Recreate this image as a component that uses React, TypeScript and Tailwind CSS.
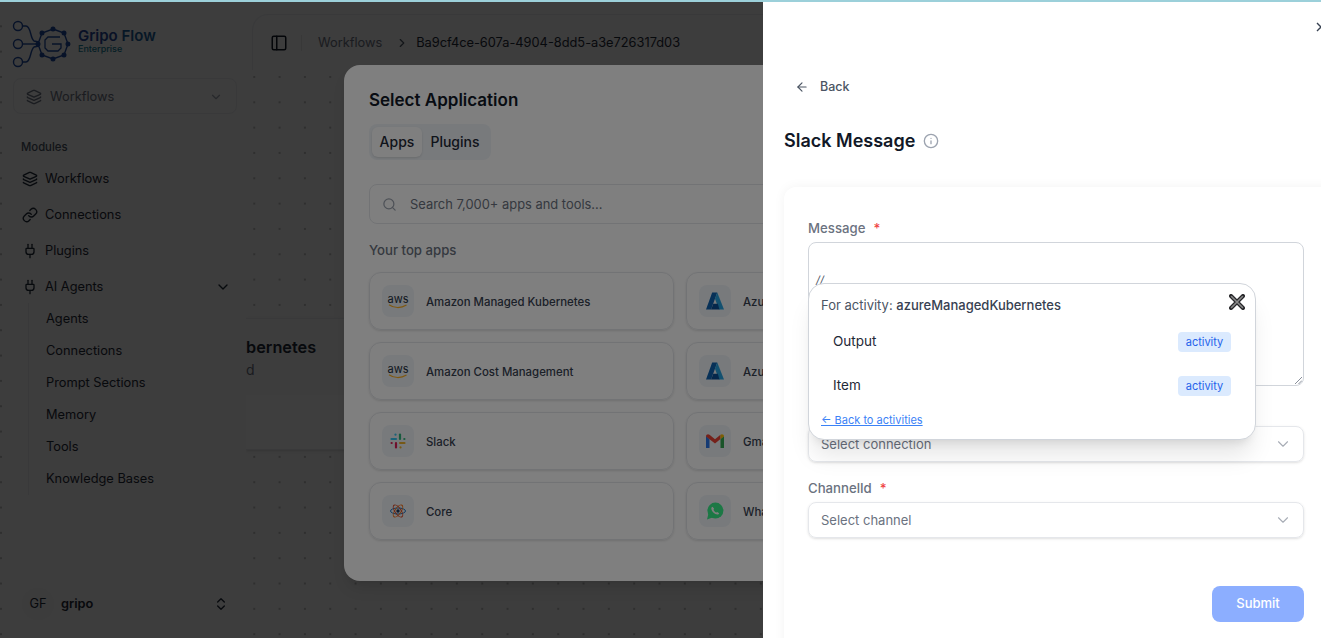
import { ReactNode } from "react";
import {
  ArrowLeft,
  ChevronDown,
  ChevronRight,
  ChevronsUpDown,
  Info,
  Layers,
  Link,
  PanelLeft,
  Plug,
  Search,
} from "lucide-react";

const subItems = [
  "Agents",
  "Connections",
  "Prompt Sections",
  "Memory",
  "Tools",
  "Knowledge Bases",
];

function GripoLogo() {
  const points = [
    [53, 31],
    [64, 35],
    [68, 46],
    [64, 57],
    [53, 61],
    [42, 57],
    [38, 46],
    [42, 35],
  ];
  return (
    <svg width="62" height="52" viewBox="10 20 62 52" fill="none" stroke="#1e4aa0" strokeWidth="1.4">
      <circle cx="18" cy="28" r="4.5" />
      <circle cx="18" cy="46" r="4.5" />
      <circle cx="18" cy="64" r="4.5" />
      <path d="M22.5 28H26C31 28 30 40 34 43L39 44" />
      <path d="M22.5 46H39" />
      <path d="M22.5 64H26C31 64 30 52 34 49L39 48" />
      <polygon points={points.map((p) => p.join(",")).join(" ")} />
      {points.map((p) => (
        <circle key={p.join()} cx={p[0]} cy={p[1]} r="1.8" fill="#1e4aa0" />
      ))}
      <path d="M60 39H48L45 42V50L48 53H58L61 50V46H52" strokeWidth="1.3" />
    </svg>
  );
}

function AwsIcon() {
  return (
    <div className="flex flex-col items-center leading-none">
      <span className="text-[11px] leading-[10px] text-[#232f3e]">aws</span>
      <svg width="20" height="5" viewBox="0 0 20 5" fill="none">
        <path d="M1 0.8C6 4.4 13 4.4 18.5 1" stroke="#ffb020" strokeWidth="1.2" />
      </svg>
    </div>
  );
}

function AzureIcon() {
  return (
    <svg width="18" height="18" viewBox="0 0 16 16">
      <path d="M5.5 0.5H10L4.5 15.5H0Z" fill="#0f62b0" />
      <path d="M10 0.5L16 15.5H11.5L8 6Z" fill="#27a3e0" />
      <path d="M6.5 10.5H10.5L12 15.5H4.5Z" fill="#0a4f96" />
    </svg>
  );
}

function SlackIcon() {
  return (
    <svg width="16" height="16" viewBox="0 0 16 16" fill="none" strokeWidth="2.2" strokeLinecap="round">
      <path d="M1.5 6H6" stroke="#36c5f0" />
      <path d="M5.5 1.6V1.7" stroke="#36c5f0" />
      <path d="M10 1.5V6" stroke="#2eb67d" />
      <path d="M14.4 6H14.3" stroke="#2eb67d" />
      <path d="M10 10H14.5" stroke="#ecb22e" />
      <path d="M10.5 14.4V14.3" stroke="#ecb22e" />
      <path d="M6 10V14.5" stroke="#e01e5a" />
      <path d="M1.6 10H1.7" stroke="#e01e5a" />
    </svg>
  );
}

function GmailIcon() {
  return (
    <svg width="18" height="14" viewBox="0 0 18 14" fill="none">
      <path d="M0 2V14H3.5V5Z" fill="#2a76e8" />
      <path d="M18 2V14H14.5V5Z" fill="#34a853" />
      <path d="M0 2.5C0 0.5 2 -0.5 3.5 0.8L9 5.2L14.5 0.8L14.5 5L9 9.5L0 2.5Z" fill="#ea4335" />
      <path d="M14.5 0.8C16 -0.5 18 0.5 18 2.5L14.5 5Z" fill="#fbbc04" />
    </svg>
  );
}

function CoreIcon() {
  return (
    <svg width="16" height="16" viewBox="0 0 16 16" fill="none">
      <ellipse cx="8" cy="8" rx="7.5" ry="3" stroke="#1f78c8" />
      <ellipse cx="8" cy="8" rx="3" ry="7" stroke="#f97316" transform="rotate(35 8 8)" />
      <ellipse cx="8" cy="8" rx="3" ry="7" stroke="#dc4a26" transform="rotate(-35 8 8)" />
      <circle cx="8" cy="8" r="1.7" fill="#1e3a5f" />
    </svg>
  );
}

function WhatsappIcon() {
  return (
    <svg width="18" height="18" viewBox="0 0 18 18">
      <circle cx="9.4" cy="8.6" r="8" fill="#38f08a" />
      <path d="M1 17.5L2.5 11.5L6.5 15.5Z" fill="#38f08a" />
      <path
        d="M6.6 4.8L5.5 5.6C5 7 5.8 9 7.3 10.6C8.9 12.1 10.9 12.9 12.3 12.4L13.2 11.3L11.2 9.9L10.3 10.6C9.3 10.3 7.9 8.9 7.5 7.8L8.1 6.8Z"
        fill="#ffffff"
      />
    </svg>
  );
}

const apps: { name: string; icon: ReactNode }[] = [
  { name: "Amazon Managed Kubernetes", icon: <AwsIcon /> },
  { name: "Azure Managed Kubernetes", icon: <AzureIcon /> },
  { name: "Amazon Cost Management", icon: <AwsIcon /> },
  { name: "Azure Cost Management", icon: <AzureIcon /> },
  { name: "Slack", icon: <SlackIcon /> },
  { name: "Gmail", icon: <GmailIcon /> },
  { name: "Core", icon: <CoreIcon /> },
  { name: "WhatsApp", icon: <WhatsappIcon /> },
];

function NavItem({ icon, label, chevron }: { icon: ReactNode; label: string; chevron?: boolean }) {
  return (
    <div className="flex h-9 items-center gap-[7px] pl-[7px] pr-[6px] text-[12.8px] text-[#1f2937]">
      {icon}
      <span>{label}</span>
      {chevron && <ChevronDown size={16} className="ml-auto" />}
    </div>
  );
}

function Sidebar() {
  return (
    <aside className="relative z-10 ml-[2px] flex h-full w-[244px] shrink-0 flex-col bg-[#f4f4f4] pl-[11px] pr-[9px] pt-[14px] pb-[18px]">
      <div className="-ml-[3px] flex h-[56px] items-center gap-[6px] pt-[4px]">
        <GripoLogo />
        <div className="-mt-[8px] flex flex-col">
          <span className="text-[15px] leading-[16px] font-semibold">
            <span className="text-[#24479a]">Gripo </span>
            <span className="text-[#1a5f99]">Flow</span>
          </span>
          <span className="text-[9px] leading-[9px] font-medium text-[#127a94]">Enterprise</span>
        </div>
      </div>
      <div className="mt-[8px] flex h-9 items-center gap-[8px] rounded-lg border border-[#e5e7eb] pl-[12px] pr-[13px] pt-px text-[12.8px] text-[#6b7280]">
        <Layers size={16} />
        <span>Workflows</span>
        <ChevronDown size={14} className="ml-auto text-[#9ca3af]" />
      </div>
      <div className="mt-[25px] ml-[8px] h-4 text-[11.3px] leading-4 font-medium text-[#4b5563]">Modules</div>
      <nav className="mt-[6px] flex flex-col pl-[2px]">
        <NavItem icon={<Layers size={16} />} label="Workflows" />
        <NavItem icon={<Link size={16} />} label="Connections" />
        <NavItem icon={<Plug size={16} />} label="Plugins" />
        <NavItem icon={<Plug size={16} />} label="AI Agents" chevron />
      </nav>
      <div className="-mt-[2px] ml-[15px] flex flex-col border-l border-[#e5e7eb] pl-[17px]">
        {subItems.map((item) => (
          <div key={item} className="flex h-8 items-center text-[12.8px] text-[#1f2937]">
            {item}
          </div>
        ))}
      </div>
      <div className="mt-auto flex h-8 items-center pl-[9px] pr-[8px] text-[12.8px]">
        <div className="flex size-8 items-center justify-center rounded-full bg-[#f0f0f0] text-[#1f2937]">GF</div>
        <span className="ml-[7px] font-semibold text-[#1f2937]">gripo</span>
        <ChevronsUpDown size={16} className="ml-auto text-[#1f2937]" />
      </div>
    </aside>
  );
}

function MainArea() {
  return (
    <main className="relative flex min-w-0 flex-1 flex-col">
      <header className="ml-[6px] mt-[14px] flex h-[56px] items-center rounded-tl-2xl border-l border-t border-[#e5e7eb] bg-[#f4f4f4] pl-[17px] text-[12.8px]">
        <PanelLeft size={18} className="text-[#111827]" />
        <div className="ml-[13px] mr-[16px] h-4 w-px bg-[#e0e0e0]" />
        <span className="text-[#6b7280]">Workflows</span>
        <ChevronRight size={14} className="ml-[13px] mr-[7px] text-[#4b5563]" />
        <span className="text-[#1f2937]">Ba9cf4ce-607a-4904-8dd5-a3e726317d03</span>
      </header>
      {/* workflow node on the canvas, only its right part shows past the sidebar */}
      <div className="absolute left-0 top-[318px] h-[132px] w-[280px] rounded-r-xl border-y border-r border-[#e5e7eb] bg-[#f6f6f6] shadow-sm">
        <div className="mt-[16px] text-[16.3px] leading-6 font-semibold text-[#1f2937]">bernetes</div>
        <div className="mt-[1px] text-sm leading-5 text-[#6b7280]">d</div>
        <div className="absolute inset-x-0 bottom-0 h-[54px] rounded-br-xl bg-[#fafafa]" />
      </div>
    </main>
  );
}

function AppDialog() {
  return (
    <div className="absolute left-[344px] top-[65px] h-[516px] w-[672px] rounded-2xl bg-white px-[25px] pt-[23px] shadow-lg">
      <h2 className="text-[17px] leading-6 font-semibold text-[#111827]">Select Application</h2>
      <div className="mt-[12px] inline-flex h-9 items-center rounded-lg bg-[#f1f5f9] p-[3px] text-sm font-medium text-[#1f2937]">
        <div className="flex h-[30px] w-[50px] items-center justify-center rounded-md bg-white shadow-sm">Apps</div>
        <div className="flex h-[30px] w-[66px] items-center justify-center">Plugins</div>
      </div>
      <div className="mt-[24px] flex h-10 items-center gap-[13px] rounded-lg border border-[#e5e7eb] pl-[12px] text-[12.9px] text-[#6b7280]">
        <Search size={15} className="text-[#9ca3af]" />
        <span className="pt-px">Search 7,000+ apps and tools...</span>
      </div>
      <div className="mt-[16px] h-5 text-[13.2px] leading-5 font-medium text-[#6b7280]">Your top apps</div>
      <div className="mt-[12px] grid grid-cols-2 gap-3">
        {apps.map((app) => (
          <div
            key={app.name}
            className="flex h-[58px] items-center gap-3 rounded-xl border border-[#e5e7eb] pl-[12px] shadow-sm"
          >
            <div className="flex size-8 items-center justify-center rounded-lg bg-[#f1f5f9]">{app.icon}</div>
            <span className="mt-[4px] text-[11.4px] font-medium text-[#374151]">{app.name}</span>
          </div>
        ))}
      </div>
    </div>
  );
}

function ActivityRow({ label }: { label: string }) {
  return (
    <div className="flex h-11 items-center pl-[12px] pr-[24px] text-[13.5px] text-[#1f2937]">
      <span className="-mt-[2px]">{label}</span>
      <span className="ml-auto flex h-5 w-[53px] items-center justify-center rounded bg-[#dbeafe] text-[11px] text-[#2563eb]">
        activity
      </span>
    </div>
  );
}

function VariablePopup() {
  return (
    <div className="absolute left-[808px] top-[283px] z-10 h-[157px] w-[448px] rounded-2xl border border-[#d1d5db] bg-white pl-[12px] pt-[13px] shadow-xl">
      <div className="flex h-[18px] items-center text-[13px] text-[#4b5563]">
        For activity:&nbsp;<span className="font-medium text-[#374151]">azureManagedKubernetes</span>
      </div>
      <svg width="16" height="16" viewBox="0 0 16 16" className="absolute right-[10px] top-[10px]" fill="none" strokeLinecap="round">
        <path d="M2 2L14 14M14 2L2 14" stroke="#27272a" strokeWidth="4" />
        <path d="M2.5 2.5L13.5 13.5M13.5 2.5L2.5 13.5" stroke="#8a8a8a" strokeWidth="1.6" />
      </svg>
      <div className="mt-[5px]">
        <ActivityRow label="Output" />
        <ActivityRow label="Item" />
      </div>
      <div className="mt-[4px] text-[11px] leading-4 text-[#3b82f6] underline">← Back to activities</div>
    </div>
  );
}

function Field({ label, placeholder }: { label: string; placeholder: string }) {
  return (
    <div className="mt-[17px]">
      <div className="flex h-5 items-center gap-[8px] text-[13.2px] font-medium text-[#6b7280]">
        {label} <span className="text-[#ef4444]">*</span>
      </div>
      <div className="mt-[3px] flex h-9 items-center justify-between rounded-lg border border-[#e5e7eb] pl-[12px] pr-[11px] text-[13px] text-[#6b7280] shadow-sm">
        <span className="pt-[2px]">{placeholder}</span>
        <ChevronDown size={18} strokeWidth={1.5} className="text-[#a8adb6]" />
      </div>
    </div>
  );
}

function Drawer() {
  return (
    <div className="absolute bottom-0 right-0 top-[2px] w-[558px] overflow-hidden bg-white">
      <svg width="10" height="10" viewBox="0 0 10 10" className="absolute -right-[5px] top-[20px]" stroke="#374151" strokeWidth="1.4">
        <path d="M1 1L9 9M9 1L1 9" />
      </svg>
      <div className="ml-[32px] mt-[75px] flex h-[20px] items-center gap-[11px] text-[12.5px] font-medium text-[#4b5563]">
        <ArrowLeft size={14} />
        <span>Back</span>
      </div>
      <div className="ml-[21px] mt-[30px] flex h-7 items-center gap-[8px]">
        <h1 className="text-lg font-semibold text-[#111827]">Slack Message</h1>
        <Info size={16} className="text-[#9ca3af]" />
      </div>
      <div className="ml-[21px] mt-[32px] h-[500px] w-[560px] rounded-xl bg-white pl-[24px] pr-[40px] pt-[32px] shadow-[0_0_12px_rgba(0,0,0,0.05)]">
        <div className="flex h-5 items-center gap-[8px] text-[13.2px] font-medium text-[#6b7280]">
          Message <span className="text-[#ef4444]">*</span>
        </div>
        <div className="relative mt-[3px] h-[144px] rounded-lg border border-[#d1d5db] pl-[7px] pt-[29px] text-[11px] italic text-[#4b5563]">
          //
          <svg width="8" height="8" viewBox="0 0 8 8" className="absolute bottom-[1px] right-[1px]" stroke="#6b7280" strokeWidth="0.8">
            <path d="M1 8L8 1M4.5 8L8 4.5" />
          </svg>
        </div>
        <Field label="Connection" placeholder="Select connection" />
        <Field label="ChannelId" placeholder="Select channel" />
        <div className="mt-[48px] flex justify-end">
          <div className="flex h-9 w-[92px] items-center justify-center rounded-lg bg-[#8caeff] text-[13px] font-medium text-white">
            Submit
          </div>
        </div>
      </div>
    </div>
  );
}

export default function App() {
  return (
    <div className="relative flex h-screen w-screen overflow-hidden bg-[#f4f4f4] bg-[radial-gradient(circle_at_1px_1px,#bdbdbd_1px,transparent_0)] bg-[length:25.33px_25.33px] [font-family:Inter,sans-serif]">
      <Sidebar />
      <MainArea />
      <div className="absolute inset-0 z-20 bg-black/50" />
      <div className="absolute inset-0 z-20">
        <AppDialog />
      </div>
      <div className="absolute inset-0 z-20 bg-black/50" />
      <div className="absolute inset-0 z-20">
        <Drawer />
        <VariablePopup />
      </div>
      <div className="absolute inset-x-0 top-0 z-20 h-[2px] bg-[#9cd0da]" />
    </div>
  );
}
